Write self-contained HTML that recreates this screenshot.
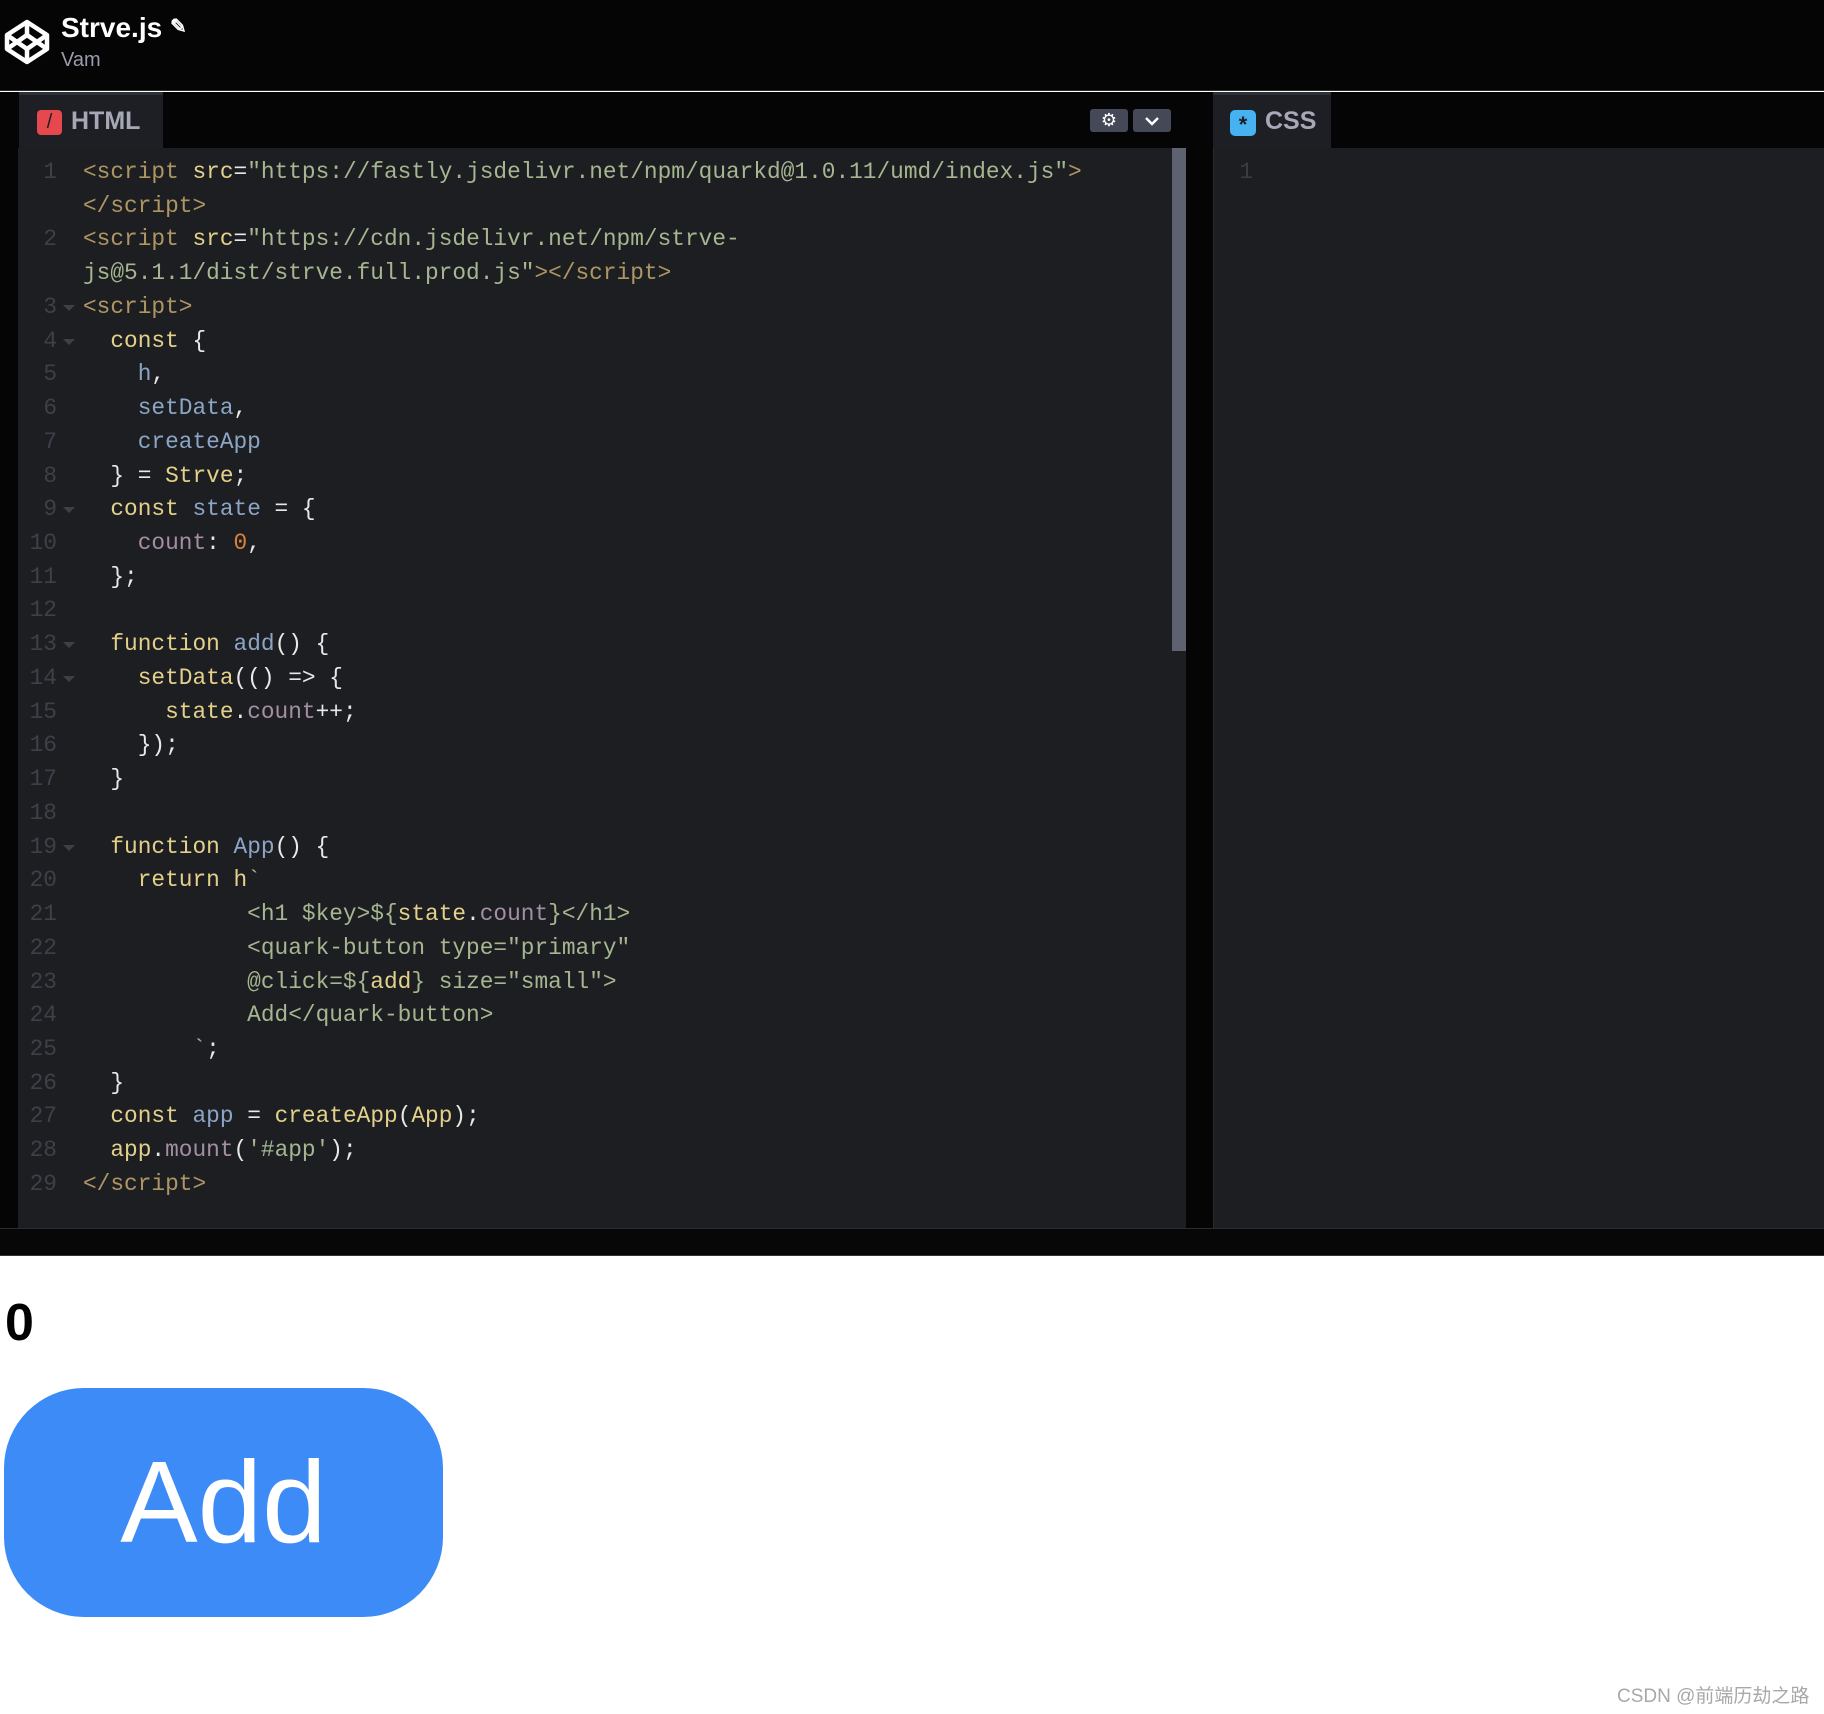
<!DOCTYPE html>
<html><head><meta charset="utf-8">
<style>
*{margin:0;padding:0;box-sizing:border-box}
body{width:1824px;height:1714px;background:#fff;position:relative;overflow:hidden;font-family:"Liberation Sans",sans-serif}
.hdr{position:absolute;left:0;top:0;width:1824px;height:91px;background:#050505;border-bottom:1px solid #2a2b30}
.title{position:absolute;left:61px;top:12px;color:#fff;font-size:28px;font-weight:bold}
.sub{position:absolute;left:61px;top:49px;color:#9a9cae;font-size:20px}
.editors{position:absolute;left:0;top:92px;width:1824px;height:1136px;background:#050505}
.tab{position:absolute;top:0;height:56px;background:#1e1f24;border-top:3px solid #2e3038;color:#a6a8b6;font-size:25px;font-weight:bold}
.code{position:absolute;background:#1d1e22}
.ln{position:absolute;height:33.73px;line-height:33.73px;font-family:"Liberation Mono",monospace;font-size:22.8px;white-space:pre;color:#e8e8e8}
.n{position:absolute;right:0;width:40px;text-align:right;color:#3e4049}
.Y{color:#e3d08a}.T{color:#ae9663}.S{color:#a5b690}.B{color:#8ca5c6}.P{color:#a48ea3}.O{color:#d9843a}.W{color:#e8e8e8}
.ar{position:absolute;left:63px;width:0;height:0;border-left:6px solid transparent;border-right:6px solid transparent;border-top:6px solid #3e4049}
</style></head><body>
<div class="hdr">
<svg style="position:absolute;left:4px;top:19px" width="46" height="46" viewBox="0 0 46 46" fill="none" stroke="#fff" stroke-width="4.5" stroke-linejoin="round">
<path d="M23 3 L43 16 L43 30 L23 43 L3 30 L3 16 Z"/><path d="M3 16 L23 30 L43 16"/><path d="M3 30 L23 16 L43 30"/><path d="M23 3 L23 16 M23 30 L23 43"/></svg>
<div class="title">Strve.js <span style="font-size:20px;position:relative;top:-4px">&#9998;</span></div>
<div class="sub">Vam</div>
</div>
<div class="editors">
<div class="tab" style="left:19px;width:144px">
<div style="position:absolute;left:18px;top:15px;width:25px;height:25px;background:#e5484d;border-radius:4px;color:#1e1f24;font-size:20px;text-align:center;line-height:25px;font-weight:normal">/</div>
<div style="position:absolute;left:52px;top:12px">HTML</div></div>
<div style="position:absolute;left:1090px;top:17px;width:38px;height:23px;background:#444857;border-radius:3px;color:#fff;font-size:18px;text-align:center;line-height:23px">&#9881;</div>
<div style="position:absolute;left:1133px;top:17px;width:38px;height:23px;background:#444857;border-radius:3px">
<svg width="38" height="23" viewBox="0 0 38 23"><path d="M13 9 L19 15 L25 9" stroke="#fff" stroke-width="2.5" fill="none"/></svg></div>
<div class="tab" style="left:1213px;width:118px">
<div style="position:absolute;left:17px;top:15px;width:26px;height:26px;background:#46b2f0;border-radius:5px;color:#1e1f24;font-size:22px;text-align:center;line-height:30px;font-weight:bold">*</div>
<div style="position:absolute;left:52px;top:12px">CSS</div></div>
<div class="code" style="left:18px;top:56px;width:1168px;height:1080px"></div>
<div style="position:absolute;left:1172px;top:56px;width:14px;height:503px;background:#5e6170"></div>
<div class="code" style="left:1213px;top:56px;width:611px;height:1080px;border-left:1px solid #2a2b30"></div>
<div class="ln" style="left:1213px;top:64px;width:40px"><span class="n" style="color:#3a3c44">1</span></div>
</div>
<div style="position:absolute;left:0;top:1228px;width:1824px;height:28px;background:#070707;border-top:1px solid #2a2b30;border-bottom:1px solid #333"></div>

<div style="position:absolute;left:5px;top:1293px;font-size:52px;font-weight:bold;color:#000">0</div>
<div style="position:absolute;left:4px;top:1388px;width:439px;height:229px;background:#3d8bf6;border-radius:80px;color:#fff;font-size:116px;text-align:center;line-height:229px">Add</div>
<div style="position:absolute;left:1617px;top:1681px;font-size:19px;color:#a8a8a8;font-family:'Liberation Sans','Noto Sans CJK SC',sans-serif">CSDN @前端历劫之路</div>

<div style="position:absolute;left:0;top:156px">
<div class="ln" style="top:0;left:17px;width:40px"><span class="n">1</span></div>
<div class="ln" style="top:0;left:83px"><span class="T">&lt;script</span> <span class="Y">src</span>=<span class="S">"https://fastly.jsdelivr.net/npm/quarkd@1.0.11/umd/index.js"</span><span class="T">&gt;</span></div>
<div class="ln" style="top:33.73px;left:83px"><span class="T">&lt;/script&gt;</span></div>
<div class="ln" style="top:67.46px;left:17px;width:40px"><span class="n">2</span></div>
<div class="ln" style="top:67.46px;left:83px"><span class="T">&lt;script</span> <span class="Y">src</span>=<span class="S">"https://cdn.jsdelivr.net/npm/strve-</span></div>
<div class="ln" style="top:101.19px;left:83px"><span class="S">js@5.1.1/dist/strve.full.prod.js"</span><span class="T">&gt;&lt;/script&gt;</span></div>
</div>
<div id="c" style="position:absolute;left:0;top:290.92px">
<div class="ln" style="top:0px;left:17px;width:40px"><span class="n">3</span></div><div class="ar" style="top:14px"></div>
<div class="ln" style="top:0px;left:83px"><span class="T">&lt;script&gt;</span></div>
<div class="ln" style="top:33.73px;left:17px;width:40px"><span class="n">4</span></div><div class="ar" style="top:48px"></div>
<div class="ln" style="top:33.73px;left:83px">  <span class="Y">const</span> {</div>
<div class="ln" style="top:67.46px;left:17px;width:40px"><span class="n">5</span></div>
<div class="ln" style="top:67.46px;left:83px">    <span class="B">h</span>,</div>
<div class="ln" style="top:101.19px;left:17px;width:40px"><span class="n">6</span></div>
<div class="ln" style="top:101.19px;left:83px">    <span class="B">setData</span>,</div>
<div class="ln" style="top:134.92px;left:17px;width:40px"><span class="n">7</span></div>
<div class="ln" style="top:134.92px;left:83px">    <span class="B">createApp</span></div>
<div class="ln" style="top:168.65px;left:17px;width:40px"><span class="n">8</span></div>
<div class="ln" style="top:168.65px;left:83px">  } = <span class="Y">Strve</span>;</div>
<div class="ln" style="top:202.38px;left:17px;width:40px"><span class="n">9</span></div><div class="ar" style="top:216px"></div>
<div class="ln" style="top:202.38px;left:83px">  <span class="Y">const</span> <span class="B">state</span> = {</div>
<div class="ln" style="top:236.11px;left:17px;width:40px"><span class="n">10</span></div>
<div class="ln" style="top:236.11px;left:83px">    <span class="P">count</span>: <span class="O">0</span>,</div>
<div class="ln" style="top:269.84px;left:17px;width:40px"><span class="n">11</span></div>
<div class="ln" style="top:269.84px;left:83px">  };</div>
<div class="ln" style="top:303.57px;left:17px;width:40px"><span class="n">12</span></div>
<div class="ln" style="top:337.3px;left:17px;width:40px"><span class="n">13</span></div><div class="ar" style="top:351px"></div>
<div class="ln" style="top:337.3px;left:83px">  <span class="Y">function</span> <span class="B">add</span>() {</div>
<div class="ln" style="top:371.03px;left:17px;width:40px"><span class="n">14</span></div><div class="ar" style="top:385px"></div>
<div class="ln" style="top:371.03px;left:83px">    <span class="Y">setData</span>(() =&gt; {</div>
<div class="ln" style="top:404.76px;left:17px;width:40px"><span class="n">15</span></div>
<div class="ln" style="top:404.76px;left:83px">      <span class="Y">state</span>.<span class="P">count</span>++;</div>
<div class="ln" style="top:438.49px;left:17px;width:40px"><span class="n">16</span></div>
<div class="ln" style="top:438.49px;left:83px">    });</div>
<div class="ln" style="top:472.22px;left:17px;width:40px"><span class="n">17</span></div>
<div class="ln" style="top:472.22px;left:83px">  }</div>
<div class="ln" style="top:505.95px;left:17px;width:40px"><span class="n">18</span></div>
<div class="ln" style="top:539.68px;left:17px;width:40px"><span class="n">19</span></div><div class="ar" style="top:554px"></div>
<div class="ln" style="top:539.68px;left:83px">  <span class="Y">function</span> <span class="B">App</span>() {</div>
<div class="ln" style="top:573.41px;left:17px;width:40px"><span class="n">20</span></div>
<div class="ln" style="top:573.41px;left:83px">    <span class="Y">return h</span><span class="S">`</span></div>
<div class="ln" style="top:607.14px;left:17px;width:40px"><span class="n">21</span></div>
<div class="ln" style="top:607.14px;left:83px">            <span class="S">&lt;h1 $key&gt;${</span><span class="Y">state</span>.<span class="P">count</span><span class="S">}&lt;/h1&gt;</span></div>
<div class="ln" style="top:640.87px;left:17px;width:40px"><span class="n">22</span></div>
<div class="ln" style="top:640.87px;left:83px">            <span class="S">&lt;quark-button type="primary"</span></div>
<div class="ln" style="top:674.6px;left:17px;width:40px"><span class="n">23</span></div>
<div class="ln" style="top:674.6px;left:83px">            <span class="S">@click=${</span><span class="Y">add</span><span class="S">} size="small"&gt;</span></div>
<div class="ln" style="top:708.33px;left:17px;width:40px"><span class="n">24</span></div>
<div class="ln" style="top:708.33px;left:83px">            <span class="S">Add&lt;/quark-button&gt;</span></div>
<div class="ln" style="top:742.06px;left:17px;width:40px"><span class="n">25</span></div>
<div class="ln" style="top:742.06px;left:83px">        <span class="S">`</span>;</div>
<div class="ln" style="top:775.79px;left:17px;width:40px"><span class="n">26</span></div>
<div class="ln" style="top:775.79px;left:83px">  }</div>
<div class="ln" style="top:809.52px;left:17px;width:40px"><span class="n">27</span></div>
<div class="ln" style="top:809.52px;left:83px">  <span class="Y">const</span> <span class="B">app</span> = <span class="Y">createApp</span>(<span class="Y">App</span>);</div>
<div class="ln" style="top:843.25px;left:17px;width:40px"><span class="n">28</span></div>
<div class="ln" style="top:843.25px;left:83px">  <span class="Y">app</span>.<span class="P">mount</span>(<span class="S">'#app'</span>);</div>
<div class="ln" style="top:876.98px;left:17px;width:40px"><span class="n">29</span></div>
<div class="ln" style="top:876.98px;left:83px"><span class="T">&lt;/script&gt;</span></div>
</div>
</body></html>
